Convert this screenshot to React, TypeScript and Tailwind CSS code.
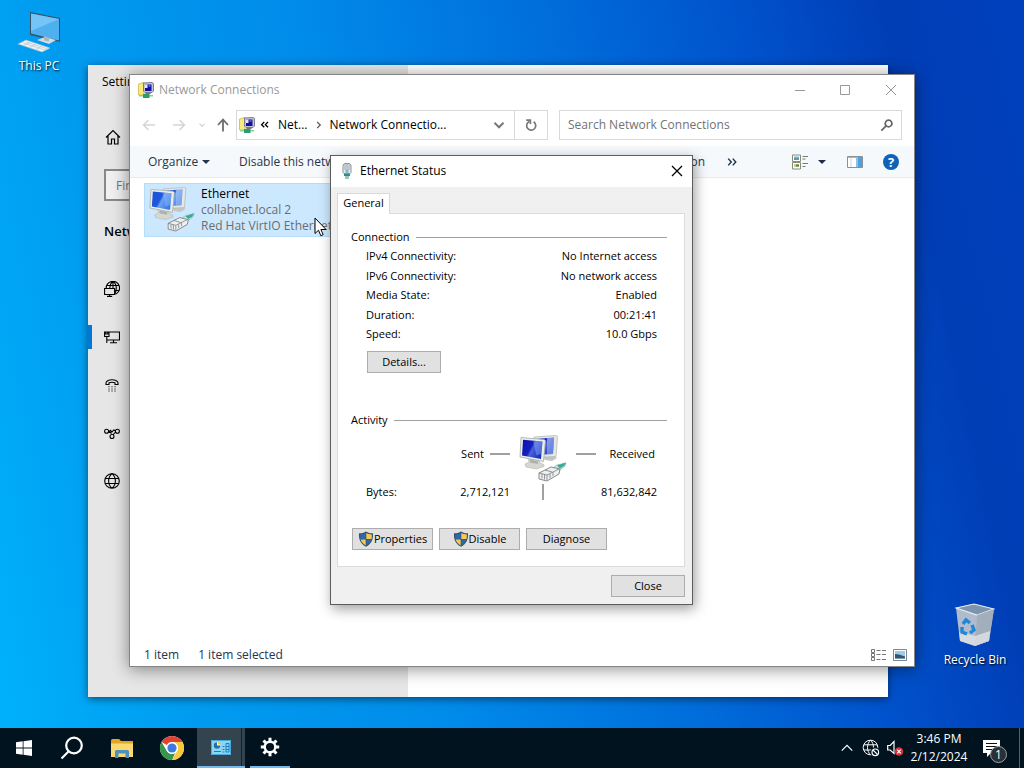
import React from "react";

type IconProps = { className?: string };

const NetFolderIcon = ({ className = "size-4" }: IconProps) => (
  <svg viewBox="0 0 16 16" className={className} aria-hidden="true">
    <path d="M.5 2L4 1l2-1v13H.5z" fill="#f9ea7c" stroke="#cdb84e" strokeWidth=".8" />
    <path d="M5.500 1l8.500-.5 1.500 1v7.500L14 10.500H7L5.500 9z" fill="#c5c6d0" stroke="#6f7290" strokeWidth=".9" />
    <path d="M7 2.500h6.500V9H7z" fill="#1010a0" />
    <path d="M7 2.500h2.500V6H7z" fill="#e4e4fa" />
    <path d="M10.500 3h2v2h-2z" fill="#5c5cd8" />
    <path d="M8 10.500h4l1 1.500H7z" fill="#777a86" />
    <path d="M1 13h14v1.500H1z" fill="#7fcfa3" />
    <path d="M5 12h6.500v4H5z" fill="#2d9c66" />
  </svg>
);

const ComputersIcon = ({ className = "size-12", pale = false }: IconProps & { pale?: boolean }) => (
  <svg viewBox="0 0 48 48" className={className} aria-hidden="true">
    <defs>
      <linearGradient id={pale ? "scrA" : "scrB"} x1="0" y1="0" x2="1" y2="0.500">
        <stop offset="0" stopColor={pale ? "#1c50d8" : "#0a0fb4"} />
        <stop offset="0.5" stopColor={pale ? "#1e58dc" : "#1420bd"} />
        <stop offset="0.6" stopColor={pale ? "#6aa2f2" : "#4a62da"} />
        <stop offset="1" stopColor={pale ? "#3a7ce8" : "#1a35c8"} />
      </linearGradient>
    </defs>
    <path d="M24 22l10-1 4 3-5 3-7-1z" fill="#c3c6c4" />
    <path d="M15 3l22-1.500 1.500 1-1.500 20-20 1z" fill="#e6e8e4" stroke="#b4b9b8" strokeWidth="0.800" />
    <path d="M17 5l18-1.500-1 16.500-17 1z" fill={pale ? "url(#scrA)" : "url(#scrB)"} />
    <path d="M28 4.100l7-.6-1 16.500-6 .4z" fill="#b9d0f8" opacity=".5" />
    <path d="M9 24l11 2.500 1 2.500 4 1.500v2l-8 2.500-10-2-1-3 4-2z" fill="#d6d7d1" stroke="#b3b5af" strokeWidth="0.600" />
    <path d="M11 25.500l8 2v2.500l-8-1.500z" fill="#aeb0a9" />
    <path d="M2 3.500L25 5.500l1.500 1-2 21L1 23z" fill="#eceee9" stroke="#a5aaab" strokeWidth="0.800" />
    <path d="M4 5.800l19.500 1.700L22 25 3 21.500z" fill={pale ? "url(#scrA)" : "url(#scrB)"} />
    <path d="M14 6.700l9.500.8-1 12-5 2z" fill="#9cbdf5" opacity=".4" />
    <path d="M31 36l7-5 9-2-1 3-5 4-7 3z" fill="#cfe7e2" stroke="#83a39b" strokeWidth="0.600" />
    <path d="M38 31.500l9-3-2 3.500-4 2.500z" fill="#36ad98" />
    <path d="M20 39l12-6 9 2-1 5-12 7-8-2z" fill="#eef0f0" stroke="#777d82" strokeWidth="0.900" />
    <path d="M20 39l8 2 12-6M28 41v5M23 40v4.500M25.500 40.500v5M31 40v4M34 38v4M26 36l7 2" fill="none" stroke="#777d82" strokeWidth="0.800" />
  </svg>
);

const ShieldIcon = () => (
  <svg viewBox="0 0 16 16" className="size-4 shrink-0" aria-hidden="true">
    <path d="M8 .5c2 1.300 4 1.800 7 1.800C15.500 9 13 13.200 8 15.700 3 13.200.5 9 1 2.300 4 2.300 6 1.800 8 .5z" fill="#35526e" />
    <path d="M7.700 2v6H2.400c-.2-1.300-.2-2.600-.2-4.500C4.500 3.400 6 3 7.700 2z" fill="#2b6aab" />
    <path d="M8.300 2v6h5.300c.2-1.300.2-2.600.2-4.500C11.500 3.400 10 3 8.300 2z" fill="#f9c856" />
    <path d="M7.700 8.500H2.600c.7 2.500 2.600 4.500 5.100 5.900z" fill="#f9c856" />
    <path d="M8.300 8.500h5.100c-.7 2.500-2.600 4.500-5.100 5.900z" fill="#2b6aab" />
  </svg>
);

const Line = ({ d, className, w = 1.2 }: { d: string; className: string; w?: number }) => (
  <svg viewBox="0 0 16 16" className={className} fill="none" stroke="currentColor" strokeWidth={w} aria-hidden="true">
    <path d={d} />
  </svg>
);

const globePath =
  "M8 .7a7.300 7.300 0 1 0 0 14.600A7.300 7.300 0 1 0 8 .7zM8 .7C3.500 4.500 3.500 11.500 8 15.300M8 .7c4.500 3.800 4.500 10.800 0 14.600M1.500 5.500h13M1.500 10.500h13";

function SettingsWindow() {
  const items = [
    { name: "Status", d: "M2.200 7.500A6.700 6.700 0 1 1 11.500 13.200M5.800 7.500C5.800 4 7 1.800 9 .5c2 1.300 3.300 3.700 3.300 6.500 0 2.200-.4 4-1.300 5.500M9 .5v7M3.200 4.500h11.600M10.600 9.500h4.600M.6 7.500h10v6H.6zM5.600 13.500v2M3 15.400h5.200" },
    { name: "Ethernet", d: "M5 3h10.500v8H3M.6 3H5v4.500H.6zM1.800 3v2h2V3M2.800 7.500V14M9.500 11v2.500M6 13.800h7" },
    { name: "Dial-up", d: "M2 6.500C1 1.500 15 1.500 14 6.500v1h-3V5.800C9 5 7 5 5 5.800v1.700H2zM4.500 9.800h1M7.500 9.800h1M10.500 9.800h1M4.500 12h1M7.500 12h1M10.500 12h1M4.500 14h1M7.500 14h1M10.500 14h1" },
    { name: "VPN", d: "M2.600 4.200a2 2 0 1 0 0 4 2 2 0 1 0 0-4zM13.400 4.200a2 2 0 1 0 0 4 2 2 0 1 0 0-4zM8 9.500a2 2 0 1 0 0 4 2 2 0 1 0 0-4zM4.500 5.500l3 3M11.600 7L9 9.800M6 5l2 2 2-2.300M4.500 7.500h1.500M10 5l1.500 1" },
    { name: "Proxy", d: globePath },
  ];
  return (
    <section aria-label="Settings" className="absolute left-[88px] top-[65px] flex h-[632px] w-[800px] bg-white shadow-[0_2px_8px_rgba(0,0,0,0.5)]">
      <div className="flex w-80 flex-col bg-[#e6e6e6]">
        <h1 className="pl-[14px] pt-2 text-xs leading-[18px] text-black">Settings</h1>
        <a href="#home" aria-label="Home" className="mt-[38px] pl-[17px] text-black">
          <Line d="M1 8.500L8 1.500l7 7M3 7v8h3.500v-5h3v5H13V7" className="size-4" />
        </a>
        <input
          aria-label="Find a setting"
          placeholder="Find a setting"
          className="ml-4 mt-6 h-8 w-72 border-2 border-[#888] bg-[#f0f0f0] px-2.5 text-xs placeholder:text-[#777]"
        />
        <h2 className="mt-5 pl-4 text-[13px] leading-5 font-semibold text-black">Network &amp; Internet</h2>
        <nav className="mt-6 flex flex-col">
          {items.map((it) => (
            <a
              key={it.name}
              href={"#" + it.name}
              aria-label={it.name}
              className="flex h-12 items-center text-black"
            >
              <span className={it.name === "Ethernet" ? "h-6 w-1 bg-[#0078d7]" : "h-6 w-1"} />
              <Line d={it.d} className="ml-3 size-4" w={1.1} />
            </a>
          ))}
        </nav>
      </div>
    </section>
  );
}

function ExplorerWindow() {
  return (
    <section
      aria-label="Network Connections"
      className="absolute left-[129px] top-[74px] flex h-[593px] w-[786px] flex-col border border-[#858585] bg-white shadow-[0_2px_16px_rgba(0,0,0,0.45)]"
    >
      <header className="flex h-[29px] shrink-0 items-center pl-2 text-[#999]">
        <NetFolderIcon />
        <h1 className="ml-[5px] flex-1 text-xs">Network Connections</h1>
        <button aria-label="Minimize" className="flex w-[45px] justify-center">
          <Line d="M3 8.500h10" className="size-4" w={1} />
        </button>
        <button aria-label="Maximize" className="flex w-[46px] justify-center">
          <Line d="M3.500 3.500h9v9h-9z" className="size-4" w={1} />
        </button>
        <button aria-label="Close window" className="flex w-[46px] justify-center">
          <Line d="M3 3l10 10M13 3L3 13" className="size-4" w={1} />
        </button>
      </header>

      <div className="flex h-[42px] shrink-0 items-center pr-3 pl-[11px]">
        <button aria-label="Back" className="text-[#d5d5d5]">
          <Line d="M14 8H3M7.500 3L2.500 8l5 5" className="size-4" w={1.5} />
        </button>
        <button aria-label="Forward" className="ml-[14px] text-[#d5d5d5]">
          <Line d="M2 8h11M8.500 3l5 5-5 5" className="size-4" w={1.5} />
        </button>
        <button aria-label="Recent locations" className="ml-2.5 text-[#d5d5d5]">
          <Line d="M4 6l4 4 4-4" className="size-2.5" w={2} />
        </button>
        <button aria-label="Up" className="ml-2 text-[#6d6d6d]">
          <Line d="M8 14.500V3M3 8l5-5.500L13 8" className="size-4" w={1.8} />
        </button>
        <div className="ml-[5px] flex h-[30px] w-[312px] items-center border border-[#d9d9d9]">
          <NetFolderIcon className="ml-0.5 size-4" />
          <Line d="M7 4L3.500 7.500 7 11M12 4L8.500 7.500 12 11" className="ml-1 size-3" w={1.8} />
          <a href="#network" className="ml-[7px] text-xs text-black">Net...</a>
          <Line d="M5 3l5 5-5 5" className="ml-1.5 size-2.5 text-[#555]" w={2} />
          <a href="#connections" className="ml-1.5 flex-1 text-xs whitespace-nowrap text-black">Network Connectio...</a>
          <button aria-label="Previous locations" className="mr-[9px] text-[#777]">
            <Line d="M2 5l6 6 6-6" className="size-3" w={2.6} />
          </button>
          <button aria-label="Refresh" className="flex h-full w-[33px] items-center justify-center border-l border-[#d9d9d9] text-[#777]">
            <Line d="M11 4.300A5.200 5.200 0 1 1 6 4M2.500 2.500h4.800v4.300" className="size-3.5" w={1.9} />
          </button>
        </div>
        <label className="ml-[11px] flex h-[30px] flex-1 items-center border border-[#d9d9d9] pr-[7px] pl-2 text-[#666]">
          <input
            aria-label="Search Network Connections"
            placeholder="Search Network Connections"
            className="min-w-0 flex-1 text-xs outline-none placeholder:text-[#737373]"
          />
          <Line d="M9.800 2.500a3.800 3.800 0 1 0 .01 0zM7 9l-5.500 5.500" className="size-3.5" w={2} />
        </label>
      </div>

      <div role="toolbar" className="flex h-8 shrink-0 items-center border-b border-[#e6ebef] bg-[#f5f9fb] pr-[15px] pl-[18px] text-xs text-[#26344e]">
        <button className="flex w-[91px] items-center gap-1">
          Organize
          <svg viewBox="0 0 8 4" className="h-1 w-2" aria-hidden="true"><path d="M0 0h8L4 4z" fill="currentColor" /></svg>
        </button>
        <button className="whitespace-nowrap">Disable this network device</button>
        <button className="ml-auto whitespace-nowrap">Rename this connection</button>
        <button aria-label="More commands" className="ml-[21px]">
          <Line d="M3 3.500L7 8l-4 4.500M9 3.500L13 8l-4 4.500" className="size-3" w={2} />
        </button>
        <button aria-label="Change your view" className="ml-[54px] flex items-center gap-2.5">
          <svg viewBox="0 0 16 16" className="size-4" aria-hidden="true">
            <path d="M.5 1h8v6.500h-8zM.5 8.500h8V15h-8z" fill="#fff" stroke="#8a8a7c" />
            <path d="M2 2.500h5v3H2z" fill="#7eb3d8" /><path d="M2 4.500h5v1.200H2z" fill="#4d7c58" />
            <path d="M2 10h5v3H2z" fill="#b8d29a" /><path d="M4 10.500h3v2H4z" fill="#61804e" />
            <path d="M10.500 2.500H16M10.500 5h3M10.500 9.500H16M10.500 12.500h3" stroke="#777" />
          </svg>
          <svg viewBox="0 0 8 4" className="h-1 w-2" aria-hidden="true"><path d="M0 0h8L4 4z" fill="#1e2a48" /></svg>
        </button>
        <button aria-label="Preview pane" className="ml-[21px]">
          <svg viewBox="0 0 16 12" className="h-3 w-4" aria-hidden="true">
            <path d="M.5.500h15v11H.5z" fill="#fff" stroke="#8b8f96" />
            <path d="M1 1h14v1H1z" fill="#aeb7c0" /><path d="M4 2v9" stroke="#d9d2cc" />
            <path d="M9 1h6v10H9z" fill="#4fa0dc" /><path d="M9 1h2v10H9z" fill="#8bc1ea" />
          </svg>
        </button>
        <button aria-label="Help" className="ml-5 flex size-4 items-center justify-center rounded-full bg-[#0f62b8] text-[13px] leading-4 font-bold text-white">?</button>
      </div>

      <main className="flex-1 pt-[5px] pl-[14px]">
        <button className="flex h-[54px] w-[250px] items-start border border-[#b5dcf8] bg-[#cce8ff] pt-0.5 pl-1 text-left text-xs leading-4">
          <ComputersIcon className="size-[46px] shrink-0" pale />
          <span className="ml-[6px] flex flex-col whitespace-nowrap text-[#6d6d6d]">
            <span className="text-black">Ethernet</span>
            <span>collabnet.local 2</span>
            <span>Red Hat VirtIO Ethernet Adapter</span>
          </span>
        </button>
      </main>

      <footer className="flex h-6 shrink-0 items-center pt-px pr-[7px] pl-[14px] text-xs text-[#26344e]">
        <span>1 item</span>
        <span className="ml-[19px] flex-1">1 item selected</span>
        <button aria-label="Details view">
          <svg viewBox="0 0 17 14" className="h-3.5 w-[17px]" fill="none" aria-hidden="true">
            <path d="M1.500 1.500h3v3h-3zM1.500 5.500h3v3h-3zM1.500 9.500h3v3h-3z" stroke="#777" />
            <path d="M6.500 2.500h4M12 2.500h4M6.500 6.500h4M12 6.500h4M6.500 11.500h4M12 11.500h4" stroke="#777" />
          </svg>
        </button>
        <button aria-label="Large icons view" className="ml-1.5">
          <svg viewBox="0 0 14 12" className="h-3 w-3.5" aria-hidden="true">
            <path d="M.5.500h13v11H.5z" fill="#fff" stroke="#7b8794" />
            <path d="M2 2h10v7.500H2z" fill="#9fcbeb" /><path d="M2 5l4 .5 6 2v2H2z" fill="#35556f" />
          </svg>
        </button>
      </footer>
    </section>
  );
}

const dialogButton =
  "flex h-[22px] items-center justify-center border border-[#adadad] bg-[#e1e1e1] text-black";

function StatusDialog() {
  const rows = [
    ["IPv4 Connectivity:", "No Internet access"],
    ["IPv6 Connectivity:", "No network access"],
    ["Media State:", "Enabled"],
    ["Duration:", "00:21:41"],
    ["Speed:", "10.0 Gbps"],
  ];
  return (
    <section
      role="dialog"
      aria-label="Ethernet Status"
      className="absolute left-[330px] top-[155px] flex h-[450px] w-[363px] flex-col border border-[#5c5c5c] bg-[#f0f0f0] text-[11px] leading-4 text-black shadow-[2px_4px_12px_rgba(0,0,0,0.38)]"
    >
      <header className="flex h-[31px] shrink-0 items-center bg-white pr-[7px] pb-0.5 pl-2">
        <svg viewBox="0 0 16 16" className="size-4" aria-hidden="true">
          <path d="M4 2L5.500.5h5L12 2v7.500L10.500 11h-5L4 9.500z" fill="#e4eaee" stroke="#8b939a" />
          <path d="M6 1v6M8 1v6M10 1v6" stroke="#8b939a" strokeWidth=".8" />
          <path d="M6.500 6.500h3V10h-3z" fill="#8bb4dc" />
          <path d="M5 10.500h6V13H5z" fill="#2f8f7f" /><path d="M7 13v3M9 13v3" stroke="#2f8f7f" />
        </svg>
        <h1 className="ml-[5px] flex-1 text-xs">Ethernet Status</h1>
        <button aria-label="Close dialog">
          <Line d="M3 3l10 10M13 3L3 13" className="size-4" w={1.3} />
        </button>
      </header>

      <div className="flex flex-1 flex-col pt-1.5 pr-[7px] pl-1.5">
        <div role="tablist" className="flex">
          <button role="tab" aria-selected="true" className="relative z-10 -mb-px h-[21px] w-[53px] border border-b-0 border-[#d9d9d9] bg-white pb-0.5">
            General
          </button>
        </div>
        <div role="tabpanel" className="flex h-[354px] flex-col border border-[#dcdcdc] bg-white pt-[15px] pr-[17px] pl-[13px]">
          <div className="flex items-center gap-1.5">
            <h2>Connection</h2>
            <span className="h-px flex-1 bg-[#a0a0a0]" />
          </div>
          <dl className="mt-[3px] flex h-[94px] flex-col justify-between pr-[10px] pl-[15px]">
            {rows.map(([k, v]) => (
              <div key={k} className="flex justify-between">
                <dt>{k}</dt>
                <dd>{v}</dd>
              </div>
            ))}
          </dl>
          <button className={dialogButton + " mt-[9px] ml-4 w-[74px]"}>Details...</button>

          <div className="mt-[39px] flex items-center gap-1.5">
            <h2>Activity</h2>
            <span className="h-px flex-1 bg-[#a0a0a0]" />
          </div>
          <div className="mt-1.5 grid grid-cols-[144px_66px_1fr] gap-y-0.5 pr-[10px] pl-[15px]">
            <div className="flex items-center justify-end gap-1.5 pb-2">
              <span>Sent</span>
              <span className="h-0.5 w-5 bg-[#a0a0a0]" />
            </div>
            <div className="flex justify-center">
              <ComputersIcon className="size-12" />
            </div>
            <div className="flex items-center justify-between pr-0.5 pb-2">
              <span className="h-0.5 w-5 bg-[#a0a0a0]" />
              <span>Received</span>
            </div>
            <div className="flex justify-between">
              <span>Bytes:</span>
              <span className="pl-2">2,712,121</span>
            </div>
            <span className="h-4 w-0.5 justify-self-center bg-[#a0a0a0]" />
            <span className="text-right">81,632,842</span>
          </div>
          <div className="mt-7 ml-px flex gap-1.5">
            <button className={dialogButton + " w-[81px]"}><ShieldIcon />Properties</button>
            <button className={dialogButton + " w-[81px]"}><ShieldIcon />Disable</button>
            <button className={dialogButton + " w-[81px]"}>Diagnose</button>
          </div>
        </div>
        <button className={dialogButton + " mt-2 w-[74px] self-end"}>Close</button>
      </div>
    </section>
  );
}

function Taskbar() {
  return (
    <footer className="relative flex h-10 shrink-0 items-stretch bg-[#01131f] text-white">
      <button aria-label="Start" className="flex w-12 items-center justify-center">
        <svg viewBox="0 0 16 16" className="size-4" fill="currentColor" aria-hidden="true">
          <path d="M0 2.200L6.700 1.300v6.300H0zM7.500 1.200L16 0v7.600H7.500zM0 8.400h6.700v6.300L0 13.800zM7.500 8.400H16V16l-8.500-1.200z" />
        </svg>
      </button>
      <button aria-label="Search" className="flex w-12 items-center justify-center">
        <svg viewBox="0 0 24 24" className="size-6" fill="none" stroke="currentColor" strokeWidth="2.200" aria-hidden="true">
          <circle cx="14" cy="9.500" r="7.800" /><path d="M8.500 15.500L1.500 22.500" />
        </svg>
      </button>
      <button aria-label="File Explorer" className="flex w-[52px] items-center justify-center">
        <svg viewBox="0 0 22 19" className="h-[19px] w-[22px]" aria-hidden="true">
          <path d="M0 1.500Q0 0 1.500 0H8l2 2h12v16H0z" fill="#e2a625" />
          <path d="M0 4.500h22V18H0z" fill="#fcd873" />
          <path d="M4 19v-6.500Q4 11 5.500 11h11Q18 11 18 12.500V19h-3.500v-4.500h-7V19z" fill="#4a92bd" />
        </svg>
      </button>
      <button aria-label="Google Chrome" className="flex w-12 items-center justify-center">
        <svg viewBox="0 0 24 24" className="size-6" aria-hidden="true">
          <circle cx="12" cy="12" r="12" fill="#fff" />
          <path d="M12 0a12 12 0 0 1 10.400 6H12a6 6 0 0 0-5.200 3L1.600 6A12 12 0 0 1 12 0z" fill="#df4233" />
          <path d="M22.400 6A12 12 0 0 1 12 24l5.200-9A6 6 0 0 0 17.200 9a6 6 0 0 0-5.200-3z" fill="#f7cb3e" />
          <path d="M1.600 6l5.200 9A6 6 0 0 0 12 18a6 6 0 0 0 3.200-.9L12 24A12 12 0 0 1 1.600 6z" fill="#38964c" />
          <circle cx="12" cy="12" r="5.800" fill="#fff" /><circle cx="12" cy="12" r="4.600" fill="#3f79e0" />
        </svg>
      </button>
      <button aria-label="Network Connections" className="ml-px flex w-12 border-b-2 border-[#76b9ed] bg-[#33444e]">
        <span className="flex flex-1 items-center justify-center pl-1">
          <svg viewBox="0 0 20 15" className="h-[15px] w-5" aria-hidden="true">
            <path d="M0 0h20v15H0z" fill="#8ad6f5" /><path d="M.5.500h19v14h-19z" fill="none" stroke="#4aa9d8" />
            <circle cx="6" cy="5.500" r="3.300" fill="#fff" />
            <path d="M6 5.500V2.200a3.300 3.300 0 1 0 3.300 3.300z" fill="#1f6fae" /><path d="M7 4.500V2a3 3 0 0 1 2.500 2.500z" fill="#f3c23e" />
            <path d="M11.500 6.500h2M11.500 9.500h2M11.500 12h2M15 3.500h3v8.500h-3zM15 6.500h3M15 9.500h3M3 11.500h7" stroke="#1f7ab8" fill="none" />
          </svg>
        </span>
        <span className="w-1 border-l border-[#14242e]" />
      </button>
      <button aria-label="Settings" className="ml-[5px] flex w-10 items-center justify-center border-b-2 border-[#76b9ed]">
        <svg viewBox="0 0 20 20" className="size-5" fill="none" stroke="currentColor" aria-hidden="true">
          <circle cx="10" cy="10" r="5.300" strokeWidth="2.400" />
          <path d="M10 .8v3.400M10 15.800v3.400M.8 10h3.400M15.800 10h3.400M3.500 3.500l2.400 2.400M14.100 14.100l2.400 2.400M16.500 3.500l-2.400 2.400M5.900 14.100l-2.400 2.400" strokeWidth="3" />
        </svg>
      </button>
      <div className="ml-auto flex items-center">
        <button aria-label="Show hidden icons">
          <Line d="M2 11l6-6 6 6" className="size-3.5" w={1.4} />
        </button>
        <button aria-label="Network: no Internet" className="ml-2">
          <svg viewBox="0 0 18 18" className="size-[18px]" fill="none" stroke="currentColor" aria-hidden="true">
            <path d="M8.500 1.200a7.300 7.300 0 1 0 0 14.600A7.300 7.300 0 1 0 8.500 1.200zM8.500 1.200C4.500 5 4.500 12 8.500 15.800M8.500 1.200c4 3.800 4 10.800 0 14.600M2 5.800h13M2 11h13" />
            <circle cx="13.300" cy="13.300" r="4.600" fill="#01131f" stroke="#01131f" />
            <circle cx="13.300" cy="13.300" r="3.300" strokeWidth="1.200" /><path d="M11 11l4.600 4.600" strokeWidth="1.200" />
          </svg>
        </button>
        <button aria-label="Volume: no audio device" className="ml-[7px]">
          <svg viewBox="0 0 17 16" className="h-4 w-[17px]" fill="none" stroke="currentColor" aria-hidden="true">
            <path d="M.7 5.500h2.500L7 1.500v12L3.200 10H.7z" strokeWidth="1.200" />
            <circle cx="12" cy="11.500" r="4.300" fill="#d6303a" stroke="none" />
            <path d="M10.200 9.700l3.600 3.600M13.800 9.700l-3.600 3.600" strokeWidth="1.200" />
          </svg>
        </button>
        <button className="ml-1.5 w-[58px] text-center text-xs leading-[18px] whitespace-nowrap">
          <time className="block">3:46 PM</time>
          <time className="block">2/12/2024</time>
        </button>
        <button aria-label="Notifications" className="relative ml-[11px] mr-2 size-8">
          <svg viewBox="0 0 17 17" className="absolute left-1 top-2 size-[17px]" aria-hidden="true">
            <path d="M0 0h17v13H8l-4 4v-4H0z" fill="#fff" />
            <path d="M3 3.500h11M3 6.500h11M3 9.500h8" stroke="#01131f" strokeWidth="1.200" />
          </svg>
          <span className="absolute left-[11px] top-[14px] flex size-[17px] items-center justify-center rounded-full border border-[#9aa0a6] bg-[#2b3036] text-xs leading-none">1</span>
        </button>
        <span className="mr-1 h-10 w-px bg-[#56636e]" />
      </div>
    </footer>
  );
}

export default function App() {
  return (
    <div className="flex min-h-screen flex-col overflow-hidden bg-[linear-gradient(78deg,#00b2fc_0%,#009cf0_17%,#008cea_38%,#0070dc_58%,#0052cc_76%,#003eb6_88%,#0040bc_100%)] font-['Open_Sans','Noto_Sans',sans-serif]">
      <div className="relative min-h-[728px] flex-1">
        <button className="absolute left-0 top-2.5 flex w-[78px] flex-col items-center text-xs text-white [text-shadow:1px_1px_2px_#000]">
          <svg viewBox="0 0 48 44" className="h-11 w-12" aria-hidden="true">
            <path d="M15 2l30 6v24l-30-7z" fill="#33536c" />
            <path d="M16 3.500l28 5.500v21.500L16 23.500z" fill="#4fb0f0" />
            <path d="M16 3.500l28 5.500-28 12z" fill="#8ed2fb" opacity=".6" />
            <path d="M22 30l8-3 11 3-7 4z" fill="#d4dde4" /><path d="M29 26l5 1.500v4l-5-1z" fill="#a5b5c1" />
            <path d="M3 34l8-4 24 8-8 4z" fill="#eef3f6" stroke="#a9bac6" strokeWidth=".6" />
            <path d="M8 33l22 7M11 32l22 7M8 36l7-4M14 38l7-4M20 40l7-4" stroke="#b9c6cf" strokeWidth=".7" />
          </svg>
          <span className="mt-1">This PC</span>
        </button>

        <SettingsWindow />
        <ExplorerWindow />
        <StatusDialog />

        <button className="absolute left-[940px] top-[602px] flex w-[70px] flex-col items-center text-xs whitespace-nowrap text-white [text-shadow:1px_1px_2px_#000]">
          <svg viewBox="0 0 40 46" className="h-[46px] w-10" aria-hidden="true">
            <path d="M1 6l18-4 20 5-5 32-14 5-15-5z" fill="#b9c3cf" opacity=".95" />
            <path d="M1 6l18-4 20 5-17 6z" fill="#7d94ac" stroke="#e8eef2" strokeWidth="1.200" />
            <path d="M22 13l17-6-5 32-14 5z" fill="#9faab8" opacity=".8" />
            <path d="M4 30l16 4 15-5-1 10-14 5-15-5z" fill="#e0e2e4" opacity=".8" />
            <g fill="none" stroke="#1f86d8" strokeWidth="3.400">
              <path d="M8 22l3-4 4 3" /><path d="M17 23l2 5-4 3" /><path d="M12 32l-5-2 0-5" />
            </g>
          </svg>
          <span className="mt-1">Recycle Bin</span>
        </button>

        <svg viewBox="0 0 13 20" className="pointer-events-none absolute left-[314px] top-[217px] h-5 w-[13px]" aria-hidden="true">
          <path d="M1 1v15.500l3.500-3.300 2.300 5.500 2.400-1-2.300-5.200H12z" fill="#fff" stroke="#000" />
        </svg>
      </div>
      <Taskbar />
    </div>
  );
}
